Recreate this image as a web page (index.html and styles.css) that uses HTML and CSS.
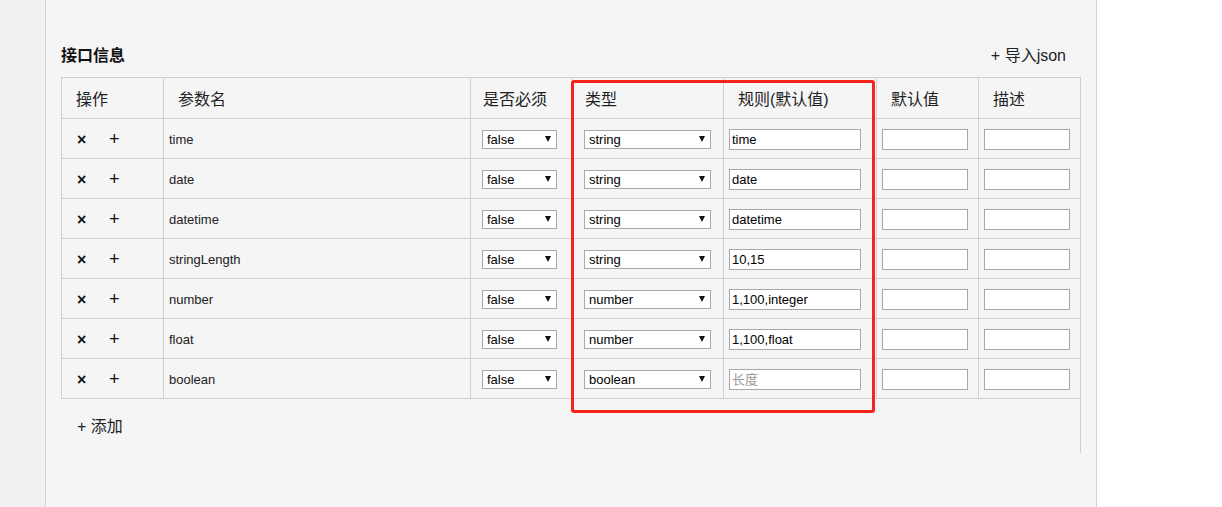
FILE: index.html
```html
<!DOCTYPE html>
<html lang="zh-CN">
<head>
<meta charset="utf-8">
<title>接口信息</title>
<link rel="stylesheet" href="styles.css">
</head>
<body>
<div class="page">
  <aside class="side"></aside>
  <main class="panel">
    <div class="panel-head">
      <h2 class="title">接口信息</h2>
      <a class="import">+ 导入json</a>
    </div>
    <div class="table-wrap">
      <table class="params">
        <thead>
          <tr>
            <th class="c-op">操作</th>
            <th class="c-name">参数名</th>
            <th class="c-req tight">是否必须</th>
            <th class="c-type tight">类型</th>
            <th class="c-rule">规则(默认值)</th>
            <th class="c-def">默认值</th>
            <th class="c-desc">描述</th>
          </tr>
        </thead>
        <tbody>
          <tr>
            <td class="ops"><span class="del">×</span><span class="add">+</span></td>
            <td class="name">time</td>
            <td><span class="sel sel-req"><select><option>false</option></select></span></td>
            <td><span class="sel sel-type"><select><option>string</option></select></span></td>
            <td><input class="in-rule" type="text" value="time"></td>
            <td><input class="in-small" type="text"></td>
            <td><input class="in-small" type="text"></td>
          </tr>
          <tr>
            <td class="ops"><span class="del">×</span><span class="add">+</span></td>
            <td class="name">date</td>
            <td><span class="sel sel-req"><select><option>false</option></select></span></td>
            <td><span class="sel sel-type"><select><option>string</option></select></span></td>
            <td><input class="in-rule" type="text" value="date"></td>
            <td><input class="in-small" type="text"></td>
            <td><input class="in-small" type="text"></td>
          </tr>
          <tr>
            <td class="ops"><span class="del">×</span><span class="add">+</span></td>
            <td class="name">datetime</td>
            <td><span class="sel sel-req"><select><option>false</option></select></span></td>
            <td><span class="sel sel-type"><select><option>string</option></select></span></td>
            <td><input class="in-rule" type="text" value="datetime"></td>
            <td><input class="in-small" type="text"></td>
            <td><input class="in-small" type="text"></td>
          </tr>
          <tr>
            <td class="ops"><span class="del">×</span><span class="add">+</span></td>
            <td class="name">stringLength</td>
            <td><span class="sel sel-req"><select><option>false</option></select></span></td>
            <td><span class="sel sel-type"><select><option>string</option></select></span></td>
            <td><input class="in-rule" type="text" value="10,15"></td>
            <td><input class="in-small" type="text"></td>
            <td><input class="in-small" type="text"></td>
          </tr>
          <tr>
            <td class="ops"><span class="del">×</span><span class="add">+</span></td>
            <td class="name">number</td>
            <td><span class="sel sel-req"><select><option>false</option></select></span></td>
            <td><span class="sel sel-type"><select><option>number</option></select></span></td>
            <td><input class="in-rule" type="text" value="1,100,integer"></td>
            <td><input class="in-small" type="text"></td>
            <td><input class="in-small" type="text"></td>
          </tr>
          <tr>
            <td class="ops"><span class="del">×</span><span class="add">+</span></td>
            <td class="name">float</td>
            <td><span class="sel sel-req"><select><option>false</option></select></span></td>
            <td><span class="sel sel-type"><select><option>number</option></select></span></td>
            <td><input class="in-rule" type="text" value="1,100,float"></td>
            <td><input class="in-small" type="text"></td>
            <td><input class="in-small" type="text"></td>
          </tr>
          <tr>
            <td class="ops"><span class="del">×</span><span class="add">+</span></td>
            <td class="name">boolean</td>
            <td><span class="sel sel-req"><select><option>false</option></select></span></td>
            <td><span class="sel sel-type"><select><option>boolean</option></select></span></td>
            <td><input class="in-rule" type="text" placeholder="长度"></td>
            <td><input class="in-small" type="text"></td>
            <td><input class="in-small" type="text"></td>
          </tr>
        </tbody>
      </table>
      <div class="add-row">+ 添加</div>
    </div>
    <div class="highlight"></div>
  </main>
  <div class="blank"></div>
</div>
</body>
</html>
```
FILE: styles.css
```css
* { box-sizing: border-box; }

html, body {
  margin: 0;
  padding: 0;
  background: #ffffff;
}

body {
  font-family: "Liberation Sans", "Noto Sans CJK SC", sans-serif;
  color: #222;
}

.page {
  display: flex;
  min-height: 100vh;
  height: 507px;
  overflow: hidden;
}

.side {
  width: 46px;
  flex: none;
  background: #f1f1f1;
  border-right: 1px solid #d2d2d2;
}

.panel {
  position: relative;
  width: 1051px;
  flex: none;
  background: #f5f5f5;
  border-right: 1px solid #d2d2d2;
  padding: 39px 15px 0 15px;
}

.blank {
  flex: 1;
  background: #fff;
}

.panel-head {
  display: flex;
  align-items: center;
  justify-content: space-between;
  height: 30px;
  margin-bottom: 8px;
}

.title {
  margin: 0;
  font-size: 16px;
  font-weight: bold;
  color: #111;
}

.import {
  font-size: 16px;
  color: #222;
  margin-right: 15px;
  cursor: pointer;
}

.table-wrap {
  width: 1020px;
  border-right: 1px solid #cfcfcf;
}

.params {
  width: 1019px;
  table-layout: fixed;
  border-collapse: separate;
  border-spacing: 0;
  border-top: 1px solid #cfcfcf;
  border-left: 1px solid #cfcfcf;
}

.params th,
.params td {
  border-right: 1px solid #cfcfcf;
  border-bottom: 1px solid #cfcfcf;
  padding: 1px 0 0 5px;
  text-align: left;
  vertical-align: middle;
}

.params th:last-child,
.params td:last-child {
  border-right: none;
}

.params th {
  height: 41px;
  font-weight: normal;
  font-size: 16px;
  color: #222;
  padding: 0 0 0 14px;
}

.params th.tight { padding-left: 12px; }

.params td {
  height: 40px;
  font-size: 13px;
  color: #222;
}

.c-op { width: 102px; }
.c-name { width: 307px; }
.c-req { width: 102px; }
.c-type { width: 151px; }
.c-rule { width: 153px; }
.c-def { width: 102px; }
.c-desc { width: 101px; }

.params td.ops {
  padding-left: 15px;
  font-size: 17px;
  color: #111;
}

.del {
  display: inline-block;
  width: 10px;
  font-weight: bold;
  font-size: 16px;
}

.add {
  display: inline-block;
  margin-left: 22px;
  font-size: 18px;
}

.sel {
  position: relative;
  display: inline-block;
  margin-left: 6px;
  vertical-align: middle;
}

.sel select {
  appearance: none;
  -webkit-appearance: none;
  display: block;
  height: 19px;
  margin: 0;
  padding: 0 0 0 4px;
  border: 1px solid #a8a8a8;
  border-radius: 0;
  background: #fff;
  font-family: "Liberation Sans", "Noto Sans CJK SC", sans-serif;
  font-size: 13px;
  color: #000;
  line-height: 17px;
}

.sel::after {
  content: "";
  position: absolute;
  right: 6px;
  top: 6px;
  width: 0;
  height: 0;
  border-left: 3.5px solid transparent;
  border-right: 3.5px solid transparent;
  border-top: 6px solid #111;
  pointer-events: none;
}

.sel-req select { width: 75px; }
.sel-type select { width: 127px; }

.params input {
  display: inline-block;
  vertical-align: middle;
  height: 21px;
  margin: 0;
  padding: 0 0 0 2px;
  border: 1px solid #a8a8a8;
  border-radius: 0;
  background: #fff;
  font-family: "Liberation Sans", "Noto Sans CJK SC", sans-serif;
  font-size: 13px;
  color: #000;
}

.params input::placeholder {
  color: #9a9a9a;
}

.in-rule { width: 132px; }
.in-small { width: 86px; }

.add-row {
  height: 54px;
  display: flex;
  align-items: center;
  padding: 0 0 2px 16px;
  font-size: 16px;
  color: #222;
}

.highlight {
  position: absolute;
  left: 525px;
  top: 80px;
  width: 304px;
  height: 333px;
  border: 3px solid #f5231c;
  border-radius: 3px;
  pointer-events: none;
}
```
